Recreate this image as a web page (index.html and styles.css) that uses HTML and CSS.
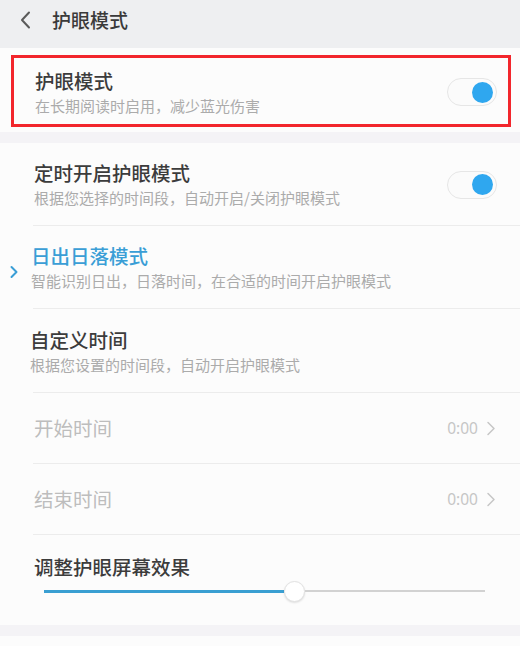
FILE: index.html
```html
<!DOCTYPE html>
<html lang="zh-CN">
<head>
<meta charset="utf-8">
<title>护眼模式</title>
<link rel="stylesheet" href="styles.css">
</head>
<body>
<div class="page">
  <header class="header">
    <svg class="back" width="12" height="18" viewBox="0 0 12 18"><path d="M10 1.5 L3 9 L10 16.5" fill="none" stroke="#5a5a5a" stroke-width="2" stroke-linecap="round" stroke-linejoin="round"/></svg>
    <div class="header-title">护眼模式</div>
  </header>

  <section class="section first">
    <div class="highlight">
      <div class="texts">
        <div class="title">护眼模式</div>
        <div class="sub">在长期阅读时启用，减少蓝光伤害</div>
      </div>
      <div class="toggle"><span class="knob"></span></div>
    </div>
  </section>

  <div class="band"></div>

  <section class="section">
    <div class="row row-two">
      <div class="texts">
        <div class="title">定时开启护眼模式</div>
        <div class="sub">根据您选择的时间段，自动开启/关闭护眼模式</div>
      </div>
      <div class="toggle"><span class="knob"></span></div>
    </div>
    <div class="divider"></div>

    <div class="row row-two row-selected">
      <svg class="mark" width="10" height="14" viewBox="0 0 10 14"><path d="M2.5 2 L7.5 7 L2.5 12" fill="none" stroke="#3a9ed6" stroke-width="2" stroke-linecap="round" stroke-linejoin="round"/></svg>
      <div class="texts">
        <div class="title blue">日出日落模式</div>
        <div class="sub">智能识别日出，日落时间，在合适的时间开启护眼模式</div>
      </div>
    </div>
    <div class="divider"></div>

    <div class="row row-two row-left row-tall">
      <div class="texts">
        <div class="title">自定义时间</div>
        <div class="sub">根据您设置的时间段，自动开启护眼模式</div>
      </div>
    </div>
    <div class="divider"></div>

    <div class="row row-one">
      <div class="title muted">开始时间</div>
      <div class="value">
        <span class="time">0:00</span>
        <svg width="10" height="15" viewBox="0 0 10 15"><path d="M2 1.5 L8 7.5 L2 13.5" fill="none" stroke="#c6c6c6" stroke-width="1.5" stroke-linecap="round" stroke-linejoin="round"/></svg>
      </div>
    </div>
    <div class="divider"></div>

    <div class="row row-one">
      <div class="title muted">结束时间</div>
      <div class="value">
        <span class="time">0:00</span>
        <svg width="10" height="15" viewBox="0 0 10 15"><path d="M2 1.5 L8 7.5 L2 13.5" fill="none" stroke="#c6c6c6" stroke-width="1.5" stroke-linecap="round" stroke-linejoin="round"/></svg>
      </div>
    </div>
    <div class="divider"></div>

    <div class="slider-row">
      <div class="title">调整护眼屏幕效果</div>
      <div class="slider">
        <span class="track-on"></span>
        <span class="thumb"></span>
        <span class="track-off"></span>
      </div>
    </div>
  </section>

  <div class="band"></div>
  <section class="section last"></section>
</div>
</body>
</html>
```

FILE: styles.css
```css
* { box-sizing: border-box; }

html, body {
  margin: 0;
  padding: 0;
  background: #fcfcfc;
}

body {
  font-family: "Noto Sans CJK SC", "Noto Sans", sans-serif;
  width: 520px;
  height: 646px;
  overflow: hidden;
}

.page {
  width: 520px;
}

.header {
  height: 48px;
  background: #eeeff1;
  display: flex;
  align-items: flex-start;
  padding: 8px 0 0 19px;
}

.back {
  margin-top: 3px;
}

.header-title {
  margin-left: 21px;
  font-size: 19px;
  line-height: 24px;
  font-weight: 500;
  color: #3a3a3a;
}

.section {
  background: #fcfcfc;
}

.section.first {
  padding: 7px 9px 5px 11px;
}

.section.last {
  height: 20px;
}

.band {
  height: 11px;
  background: #f4f3f6;
}

.highlight {
  height: 72px;
  border: 3px solid #f2262c;
  display: flex;
  align-items: center;
  justify-content: space-between;
  padding: 2px 11px 0 21px;
}

.texts {
  display: flex;
  flex-direction: column;
}

.title {
  font-size: 19.5px;
  line-height: 24px;
  font-weight: 500;
  color: #3c3c3c;
  white-space: nowrap;
}

.title.blue {
  color: #3a9ed6;
}

.title.muted {
  font-weight: 400;
  color: #bdbdbd;
}

.sub {
  margin-top: 3px;
  font-size: 15px;
  line-height: 20px;
  color: #ababab;
  white-space: nowrap;
}

.toggle {
  width: 50px;
  height: 28px;
  border-radius: 14px;
  border: 1px solid #e6e6e6;
  background: #fbfbfb;
  display: flex;
  align-items: center;
  justify-content: flex-end;
  padding: 0 3px;
  flex: none;
}

.knob {
  width: 21px;
  height: 21px;
  border-radius: 50%;
  background: #2fa7ef;
}

.row {
  display: flex;
  align-items: center;
  justify-content: space-between;
  padding: 0 23px 0 34px;
}

.row-two {
  padding-top: 18px;
  padding-bottom: 17px;
}

.row-tall {
  padding-top: 19px;
}

.row-left {
  padding-left: 30px;
}

.row-selected {
  justify-content: flex-start;
  padding-left: 9px;
}

.mark {
  flex: none;
  margin-right: 12px;
  margin-top: 8px;
}

.row-one {
  height: 70px;
  padding-right: 24px;
}

.value {
  display: flex;
  align-items: center;
  gap: 8px;
}

.time {
  font-family: "Noto Sans", sans-serif;
  font-size: 15.5px;
  color: #c6c6c6;
}

.divider {
  height: 1px;
  margin-left: 33px;
  background: #ececec;
}

.slider-row {
  height: 90px;
  padding: 20px 35px 0 34px;
}

.slider {
  display: flex;
  align-items: center;
  height: 24px;
  margin-left: 10px;
}

.track-on {
  width: 240px;
  height: 3px;
  background: #3a9fd2;
}

.thumb {
  width: 21px;
  height: 21px;
  border-radius: 50%;
  background: #fff;
  border: 1px solid #e2e2e2;
  box-shadow: 0 1px 2px rgba(0,0,0,0.12);
  flex: none;
}

.track-off {
  flex: 1;
  height: 2px;
  background: #d2d2d2;
}
```
